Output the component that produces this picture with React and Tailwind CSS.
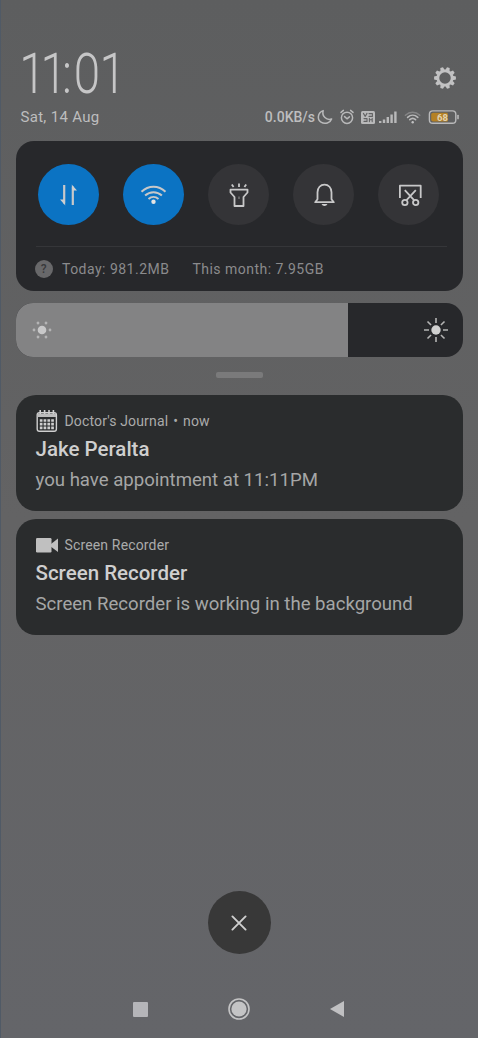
import React from "react";

const FONT = "font-['Roboto','Liberation_Sans',sans-serif]";

function GearIcon() {
  return (
    <svg className="h-[24px] w-[24px]" viewBox="-12 -12 24 24" fill="none" stroke="#c2c2c3">
      <circle r="7.1" strokeWidth="2.7" />
      {[0, 36, 72, 108, 144, 180, 216, 252, 288, 324].map((a) => (
        <path key={a} d="M7.8 -2.2L10.9 -1.4V1.4L7.8 2.2Z" fill="#c2c2c3" stroke="none" transform={`rotate(${a})`} />
      ))}
    </svg>
  );
}

function StatusIcons() {
  return (
    <svg className="h-[18px] w-[146px]" viewBox="316 108 146 18" fill="none" stroke="#b9b9ba" strokeWidth="1.5" strokeLinecap="round" strokeLinejoin="round">
      <path d="M323.2 110.6C317.6 112.6 316.8 119.6 321 122.2C325 124.6 330.4 122.8 331.6 119C326.6 120.6 321.6 116.4 323.2 110.6Z" />
      <circle cx="347" cy="117.8" r="5.6" />
      <path d="M341 112.4L343.4 110.4M353 112.4L350.6 110.4M344.6 116.6L347 118.8L349.4 116.8" />
      <rect x="361" y="111" width="14" height="13" rx="1.5" fill="#b9b9ba" stroke="none" />
      <g stroke="#626263" strokeWidth="1.1">
        <path d="M363.4 113.4L365.2 116.4L367 113.4M369 113.6H372.4V116.4H369M364 118.6H367V121.4H364M369.4 118.4V121.6M372.2 118.4V121.6M369.4 119.8H372.2" />
      </g>
      <path d="M380.2 121V123M384 119.4V123M387.8 117V123M391.6 114.4V123M395.4 111.4V123" strokeWidth="2.4" strokeLinecap="butt" />
      <path d="M405.4 115.2C409.6 111.4 415.6 111.4 419.8 115.2" stroke="#858586" />
      <path d="M407.6 117.4C410.6 114.6 414.8 114.6 417.8 117.4M409.8 119.7C411.6 118.1 413.8 118.1 415.6 119.7" strokeWidth="1.6" />
      <circle cx="412.7" cy="122.3" r="1.2" fill="#c2c2c3" stroke="none" />
      <rect x="429.4" y="110.9" width="26.4" height="12.4" rx="3.4" strokeWidth="1.4" />
      <path d="M458 115.6V118.6" strokeWidth="1.6" />
      <path d="M433 112.7H447.6V121.5H433Q431.2 121.5 431.2 119.7V114.5Q431.2 112.7 433 112.7Z" fill="#b58124" stroke="none" />
      <text x="442.4" y="120.6" textAnchor="middle" fontFamily="Roboto" fontWeight="700" fontSize="9.5" fill="#e2d3b2" stroke="none">68</text>
    </svg>
  );
}

function Toggle({ active, children }) {
  return (
    <div className={`flex h-[61px] w-[61px] items-center justify-center rounded-full ${active ? "bg-[#0b73c3]" : "bg-[#343437]"}`}>
      <svg className="h-[30px] w-[30px]" viewBox="-14.5 -15 30 30" fill="none" stroke="#c8c8c9" strokeWidth="1.8" strokeLinejoin="round">
        {children}
      </svg>
    </div>
  );
}

function DimSun() {
  return (
    <svg className="h-[20px] w-[20px]" viewBox="-10 -10 20 20" fill="#c8c8c9">
      <circle r="4.3" />
      {[0, 60, 120, 180, 240, 300].map((a) => (
        <circle key={a} cx="8" r="1.4" fill="#b4b4b5" transform={`rotate(${a})`} />
      ))}
    </svg>
  );
}

function BrightSun() {
  return (
    <svg className="h-[26px] w-[26px]" viewBox="-13 -13 26 26" fill="#d0d0d0" stroke="#b4b4b4">
      <circle r="4.7" stroke="none" />
      {[0, 45, 90, 135, 180, 225, 270, 315].map((a) => (
        <path key={a} d="M7 0H12" strokeWidth="1.6" transform={`rotate(${a})`} />
      ))}
    </svg>
  );
}

function CalendarIcon() {
  return (
    <svg className="h-[24px] w-[22px]" viewBox="0 0 22 24" fill="none" stroke="#cfcfcf">
      <rect x="1.2" y="3.6" width="19.2" height="18.6" rx="2.2" strokeWidth="1.4" />
      <path d="M1.5 4.5H20V8H1.5Z" fill="#bcbcbc" stroke="none" />
      <path d="M4.2 1V5M8.6 1V5M13 1V5M17.4 1V5" strokeWidth="1.6" />
      <path d="M3.8 11.5H18M3.8 15.2H18M3.8 18.9H18" strokeWidth="2.7" strokeDasharray="2.7 1.1" />
    </svg>
  );
}

function CameraIcon() {
  return (
    <svg className="h-[24px] w-[22px]" viewBox="0 0 22 24" fill="#c0c0c0">
      <rect y="5" width="15.5" height="14.5" rx="1.2" />
      <path d="M15 11L22 5.6V19L15 13.8Z" />
    </svg>
  );
}

function Notification({ icon, app, time, title, body }) {
  return (
    <section className="flex h-[116px] flex-col rounded-[20px] bg-[#2a2c2d] pt-[14px] pl-[19.5px] whitespace-nowrap">
      <div className="flex h-[24px] items-center text-[14px] tracking-[0.15px] text-[#aaabab]">
        {icon}
        <span className="ml-[7px]">{app}</span>
        {time && <span className="ml-[5px]">•</span>}
        {time && <span className="ml-[5px]">{time}</span>}
      </div>
      <h2 className="mt-[3px] text-[20.5px] leading-[26px] font-medium text-[#cfcfcf]">{title}</h2>
      <p className="mt-[5px] text-[18.6px] leading-[26px] text-[#a5a6a6]">{body}</p>
    </section>
  );
}

export default function App() {
  return (
    <main className={`flex h-[1038px] w-[478px] flex-col overflow-hidden border-l border-[#505a66] bg-linear-to-b from-[#5d5e5f] via-[#636364] to-[#646569] pr-[15px] pl-[15px] ${FONT}`}>
      <header className="flex h-[141px] flex-col pt-[44px] pl-[4.5px] whitespace-nowrap">
        <div className="flex h-[60px] items-center justify-between">
          <time className="-ml-px origin-left scale-x-[0.84] text-[54px] leading-[60px] font-thin text-[#c6c6c7] [-webkit-text-stroke:1.8px_#c6c6c7]">
            <span className="tracking-[-4.2px]">1</span>
            <span className="tracking-[-3.6px]">1</span>
            <span className="tracking-[3.8px]">:</span>
            <span className="tracking-[1.3px]">0</span>
            <span>1</span>
          </time>
          <div className="mt-[8px] mr-[6px]"><GearIcon /></div>
        </div>
        <div className="flex h-[26px] items-center justify-between">
          <span className="text-[15px] tracking-[0.3px] text-[#bdbdbe]">Sat, 14 Aug</span>
          <div className="mr-[1px] flex items-center">
            <span className="mr-[1px] text-[14px] font-medium text-[#bdbdbe]">0.0KB/s</span>
            <StatusIcons />
          </div>
        </div>
      </header>

      <section className="h-[150px] shrink-0 rounded-[18px] bg-[#27282b] pt-[23px]">
        <div className="flex gap-[24px] pl-[22px]">
          <Toggle active>
            <path d="M-4.3 -10V8.5M4.3 10V-8.5" strokeWidth="2.2" />
            <path d="M-8.5 4.5H-4L-3.2 10.4ZM8.5 -4.5H4L3.2 -10.4Z" fill="#cfcfd0" stroke="none" />
          </Toggle>
          <Toggle active>
            <path d="M-12 -3.2C-5 -10 5 -10 12 -3.2M-8.4 0.6C-3.5 -4 3.5 -4 8.4 0.6M-5 4C-2 1.3 2 1.3 5 4" strokeWidth="2" />
            <circle cy="6.7" r="2.2" fill="#e4e4e4" stroke="none" />
          </Toggle>
          <Toggle>
            <g transform="translate(0.5 0)">
              <path d="M-8.5 -5.4H8.5V-2.5L4.5 2V11H-4.5V2L-8.5 -2.5Z M0 -11.5V-8M-7.2 -10.6L-5.4 -8M7.2 -10.6L5.4 -8" />
              <path d="M0 1.5V4" stroke="#6b6b6c" />
            </g>
          </Toggle>
          <Toggle>
            <g transform="translate(1 0)">
              <path d="M-9.3 7.2L-7 4.2V-2.8C-7 -7.2 -4 -10.4 0 -10.4S7 -7.2 7 -2.8V4.2L9.3 7.2Z" />
              <path d="M-3 9H3Q2 11 0 11T-3 9Z" fill="#cfcfd0" stroke="none" />
            </g>
          </Toggle>
          <Toggle>
            <g transform="translate(1.8 0)">
              <path d="M-10.4 3V-9.3H10.4V3M-5.5 -4.8L4 5.4M5.5 -4.8L-4 5.4" />
              <circle cx="-5.4" cy="7.5" r="2.7" />
              <circle cx="5.4" cy="7.5" r="2.7" />
            </g>
          </Toggle>
        </div>
        <div className="mt-[21px] mr-[16px] ml-[20px] h-px bg-[#353639]" />
        <div className="flex h-[44px] items-center pl-[19px] text-[14px] tracking-[0.48px] whitespace-nowrap text-[#8b8b8d]">
          <span className="flex h-[18px] w-[18px] items-center justify-center rounded-full bg-[#68686a] text-[12px] font-medium text-[#38393b]">?</span>
          <span className="ml-[9px]">Today: 981.2MB</span>
          <span className="ml-[23px]">This month: 7.95GB</span>
        </div>
      </section>

      <section className="mt-[12px] flex h-[54px] shrink-0 overflow-hidden rounded-[17px] bg-[#27282b]">
        <div className="flex w-[332px] items-center bg-[#838384] pl-[16px]"><DimSun /></div>
        <div className="flex flex-1 items-center justify-end pr-[14px]"><BrightSun /></div>
      </section>
      <div className="mt-[15px] ml-[200px] h-[6px] w-[47px] shrink-0 rounded-[2px] bg-[#7a7a7b]" />

      <div className="mt-[17px] flex flex-col gap-[8px]">
        <Notification icon={<CalendarIcon />} app="Doctor's Journal" time="now" title="Jake Peralta" body="you have appointment at 11:11PM" />
        <Notification icon={<CameraIcon />} app="Screen Recorder" title="Screen Recorder" body="Screen Recorder is working in the background" />
      </div>

      <div className="mt-[256px] flex justify-center pr-px">
        <button className="flex h-[63px] w-[63px] items-center justify-center rounded-full bg-[#383838]">
          <svg className="h-[16px] w-[16px]" viewBox="-8 -8 16 16" stroke="#cfcfcf" strokeWidth="1.9" strokeLinecap="round">
            <path d="M-6.6 -6.6L6.6 6.6M6.6 -6.6L-6.6 6.6" />
          </svg>
        </button>
      </div>
      <nav className="mt-[43px] flex h-[24px] items-center pl-[117px]">
        <div className="h-[15px] w-[15px] rounded-[1px] bg-[#b5b5b9]" />
        <svg className="ml-[79px] h-[24px] w-[24px]" viewBox="-12 -12 24 24">
          <circle r="10" fill="none" stroke="#c4c4c5" strokeWidth="1.6" />
          <circle r="7.6" fill="#c4c4c5" />
        </svg>
        <svg className="ml-[79px] h-[16px] w-[14px]" viewBox="0 0 14 16"><path d="M0 8L14 0V16Z" fill="#c0c0c2" /></svg>
      </nav>
    </main>
  );
}
